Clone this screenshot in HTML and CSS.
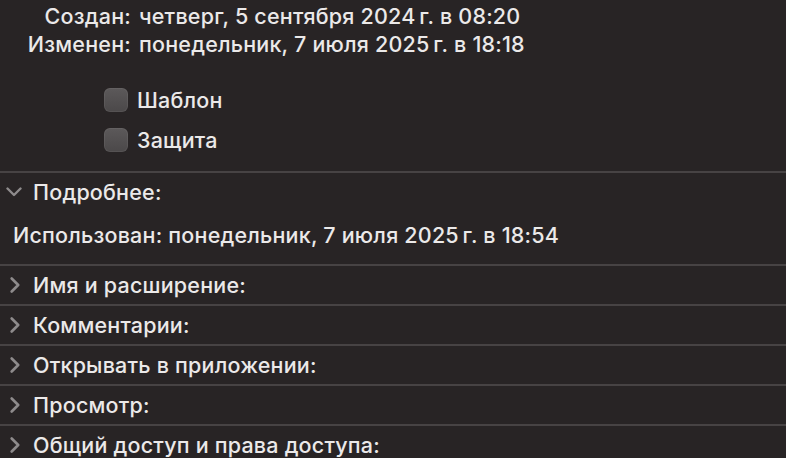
FILE: index.html
```html
<!DOCTYPE html>
<html lang="ru">
<head>
<meta charset="utf-8">
<link rel="stylesheet" href="styles.css">
</head>
<body>
<div class="panel">
  <div class="dates">
    <div class="drow"><span class="lbl">Создан:</span><span class="val">четверг, 5 сентября 2024&#8239;г. в 08:20</span></div>
    <div class="drow"><span class="lbl">Изменен:</span><span class="val">понедельник, 7 июля 2025&#8239;г. в 18:18</span></div>
  </div>
  <div class="checks">
    <label class="chk"><span class="box"></span>Шаблон</label>
    <label class="chk"><span class="box"></span>Защита</label>
  </div>
  <div class="section open">
    <div class="head">
      <svg class="chev" viewBox="0 0 16 10" width="16" height="10"><path d="M1.5 1.5 L8 8 L14.5 1.5" fill="none" stroke="currentColor" stroke-width="2.4" stroke-linecap="round" stroke-linejoin="round"/></svg>
      <span>Подробнее:</span>
    </div>
    <div class="detail">Использован: понедельник, 7 июля 2025&#8239;г. в 18:54</div>
  </div>
  <div class="section"><div class="head"><svg class="chev r" viewBox="0 0 10 16" width="10" height="16"><path d="M1.7 1.5 L8.2 8 L1.7 14.5" fill="none" stroke="currentColor" stroke-width="2.6" stroke-linecap="round" stroke-linejoin="round"/></svg><span>Имя и расширение:</span></div></div>
  <div class="section"><div class="head"><svg class="chev r" viewBox="0 0 10 16" width="10" height="16"><path d="M1.7 1.5 L8.2 8 L1.7 14.5" fill="none" stroke="currentColor" stroke-width="2.6" stroke-linecap="round" stroke-linejoin="round"/></svg><span>Комментарии:</span></div></div>
  <div class="section"><div class="head"><svg class="chev r" viewBox="0 0 10 16" width="10" height="16"><path d="M1.7 1.5 L8.2 8 L1.7 14.5" fill="none" stroke="currentColor" stroke-width="2.6" stroke-linecap="round" stroke-linejoin="round"/></svg><span>Открывать в приложении:</span></div></div>
  <div class="section"><div class="head"><svg class="chev r" viewBox="0 0 10 16" width="10" height="16"><path d="M1.7 1.5 L8.2 8 L1.7 14.5" fill="none" stroke="currentColor" stroke-width="2.6" stroke-linecap="round" stroke-linejoin="round"/></svg><span>Просмотр:</span></div></div>
  <div class="section"><div class="head"><svg class="chev r" viewBox="0 0 10 16" width="10" height="16"><path d="M1.7 1.5 L8.2 8 L1.7 14.5" fill="none" stroke="currentColor" stroke-width="2.6" stroke-linecap="round" stroke-linejoin="round"/></svg><span>Общий доступ и права доступа:</span></div></div>
</div>
</body>
</html>
```
FILE: styles.css
```css
html, body {
  margin: 0;
  padding: 0;
  background: #282425;
}
body {
  width: 786px;
  height: 458px;
  overflow: hidden;
  font-family: Inter, "Noto Sans", "DejaVu Sans", sans-serif;
  font-size: 21.5px;
  font-weight: 500;
  letter-spacing: 0.2px;
  color: #ebe9e9;
}
.panel {
  display: flex;
  flex-direction: column;
}
.dates {
  padding-top: 2px;
  display: flex;
  flex-direction: column;
}
.drow {
  display: flex;
  height: 28px;
  align-items: center;
}
.lbl {
  width: 131px;
  text-align: right;
  flex: none;
}
.val {
  padding-left: 8px;
}
.checks {
  display: flex;
  flex-direction: column;
  gap: 16px;
  padding: 30px 0 0 104px;
  height: 113px;
  box-sizing: border-box;
}
.chk {
  display: flex;
  align-items: center;
  gap: 9px;
  height: 24px;
}
.box {
  width: 24px;
  height: 24px;
  border-radius: 6px;
  background: linear-gradient(#5c595a, #4b4849);
  box-shadow: inset 0 0 0 1px rgba(255,255,255,0.06);
  flex: none;
}
.section {
  border-top: 2px solid #474344;
}
.head {
  display: flex;
  align-items: center;
  height: 38px;
  gap: 13px;
  padding-left: 10px;
}
.chev {
  color: #8e8b8c;
  flex: none;
}
.open .head {
  padding-left: 6px;
  gap: 11px;
}
.detail {
  padding: 0 0 5px 13px;
  height: 53px;
  box-sizing: border-box;
  display: flex;
  align-items: center;
}
```
